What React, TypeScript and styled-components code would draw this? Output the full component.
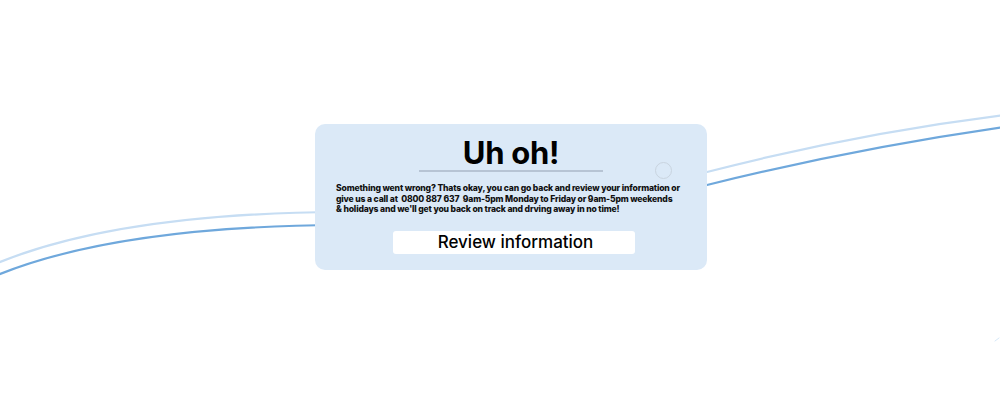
import React from "react";
import styled, { createGlobalStyle } from "styled-components";

const Global = createGlobalStyle`
  html, body { margin: 0; padding: 0; background: #ffffff; }
  body { font-family: Inter, "Noto Sans", sans-serif; }
`;

const Stage = styled.div`
  position: relative;
  width: 1000px;
  height: 408px;
  overflow: hidden;
  background: #ffffff;
  display: flex;
  align-items: flex-start;
  padding: 124px 0 0 315px;
  box-sizing: border-box;
`;

const Waves = styled.svg`
  position: absolute;
  inset: 0;
  width: 1000px;
  height: 408px;
`;

const Card = styled.section`
  position: relative;
  z-index: 1;
  width: 392px;
  height: 146px;
  box-sizing: border-box;
  background: #dbe9f7;
  border-radius: 10px;
  display: flex;
  flex-direction: column;
  align-items: center;
  padding: 11px 21px 0;
`;

const Title = styled.h1`
  margin: 0;
  font-family: Inter, sans-serif;
  font-weight: 700;
  font-size: 31px;
  line-height: 35px;
  color: #000;
  letter-spacing: -0.3px;
`;

const Rule = styled.div`
  width: 184px;
  height: 2px;
  background: #b7c4d4;
`;

const Ring = styled.span`
  position: absolute;
  left: 340px;
  top: 38px;
  width: 15px;
  height: 15px;
  border: 1.5px solid #c9d4df;
  border-radius: 50%;
`;

const Message = styled.p`
  align-self: stretch;
  margin: 11px 0 0;
  font-family: Inter, sans-serif;
  font-weight: 800;
  font-size: 8.6px;
  line-height: 10.5px;
  letter-spacing: -0.17px;
  color: #111;
`;

const ReviewButton = styled.button`
  margin-top: 16px;
  margin-left: 5px;
  width: 242px;
  height: 23px;
  border: none;
  border-radius: 3px;
  background: #ffffff;
  font-family: Inter, sans-serif;
  font-weight: 500;
  font-size: 17px;
  line-height: 23px;
  color: #000;
  padding: 0 0 0 4px;
  cursor: pointer;
`;

export default function App() {
  return (
    <>
      <Global />
      <Stage>
        <Waves viewBox="0 0 1000 408">
          <g fill="none" strokeWidth="2.2" strokeLinecap="round">
            <path
              d="M-5,264 C70,233 180,213 340,212 C500,211 600,200 707,172 C800,148 900,128 1005,115"
              stroke="#c6ddf3"
            />
            <path
              d="M-5,276 C70,245 180,226 340,225 C500,224 600,212 707,185 C800,162 900,142 1005,127"
              stroke="#6fa8dc"
            />
            <path d="M995,341 L999,338" stroke="#d6e8f8" strokeWidth="1" />
          </g>
        </Waves>
        <Card>
          <Ring />
          <Title>Uh oh!</Title>
          <Rule />
          <Message>
            Something went wrong? Thats okay, you can go back and review your information or give us a call at{"\u00a0\u00a0"}0800 887 637{"\u00a0\u00a0"}9am-5pm Monday to Friday or 9am-5pm weekends &amp;{"\u00a0"}holidays and we'll get you back on track and drving away in no time!
          </Message>
          <ReviewButton>Review information</ReviewButton>
        </Card>
      </Stage>
    </>
  );
}
